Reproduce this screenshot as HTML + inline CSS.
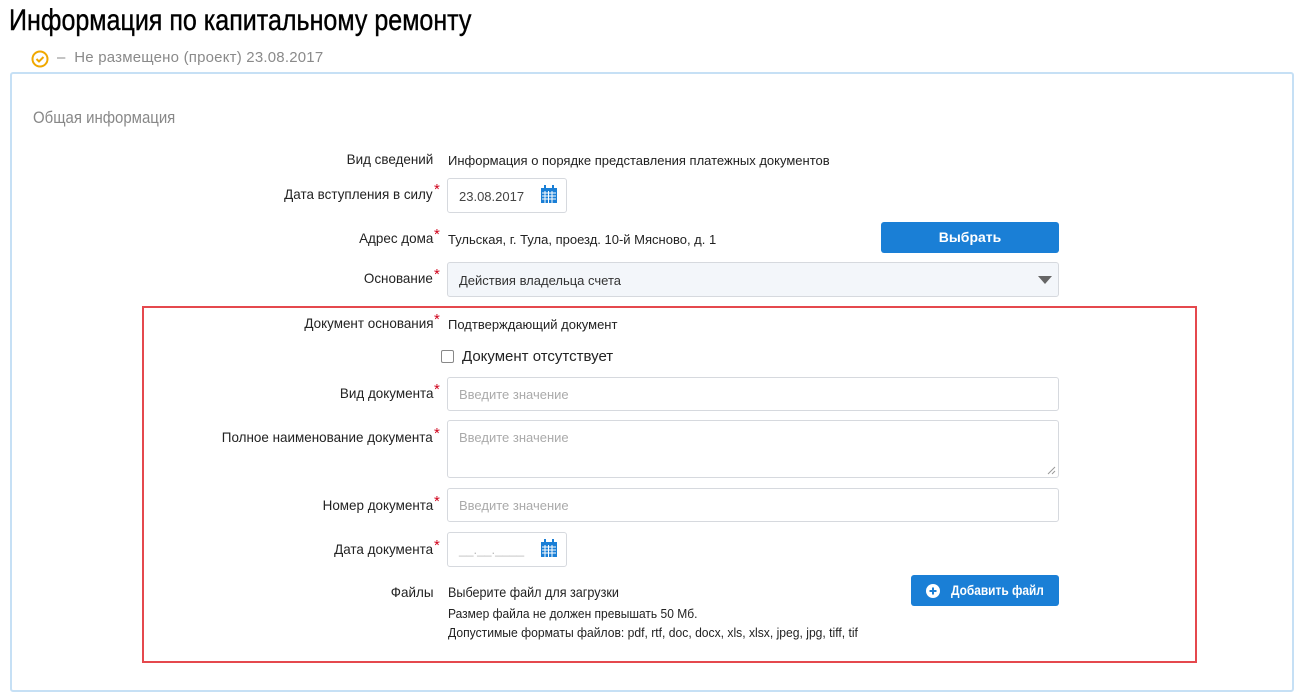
<!DOCTYPE html>
<html><head><meta charset="utf-8"><style>
body{margin:0;width:1305px;height:669px;overflow:hidden;background:#fff;font-family:"Liberation Sans",sans-serif;color:#222;position:relative}
.a{position:absolute;white-space:nowrap}
.lbl{position:absolute;right:872px;font-size:14px;white-space:nowrap;color:#222;transform:scaleX(0.96);transform-origin:right center}
.st{color:#d0021b;font-size:15px;position:absolute;left:434px}
.val{position:absolute;left:448px;font-size:13px;color:#222;white-space:nowrap}
.inp{position:absolute;left:447px;width:612px;height:32px;border:1px solid #d6d9de;border-radius:3px;background:#fff;box-sizing:border-box;font-size:13px;color:#aaa;padding:9px 11px}
.btn{position:absolute;background:#1a7fd6;color:#fff;border-radius:3px;font-size:14px;font-weight:bold;text-align:center;white-space:nowrap}
</style></head><body>
<div class="a" style="left:9px;top:4px;font-size:30px;color:#000;transform:scaleX(0.835);transform-origin:left center;-webkit-text-stroke:0.4px #000">Информация по капитальному ремонту</div>
<svg class="a" style="left:31px;top:50px" width="18" height="18" viewBox="0 0 18 18"><circle cx="9" cy="9" r="7.5" fill="none" stroke="#f0a800" stroke-width="2"/><path d="M5.5 9l2.5 2.5 4.5-4.5" fill="none" stroke="#f0a800" stroke-width="2"/></svg>
<div class="a" style="left:57px;top:49px;font-size:15px;color:#8a8a8a;letter-spacing:0.2px">–&nbsp; Не размещено (проект) 23.08.2017</div>
<div class="a" style="left:10px;top:72px;width:1284px;height:620px;border:2px solid #c6e0f5;border-radius:3px;box-sizing:border-box"></div>
<div class="a" style="left:33px;top:108px;font-size:17px;color:#888;transform:scaleX(0.88);transform-origin:left center">Общая информация</div>

<div class="lbl" style="top:151px">Вид сведений</div>
<div class="val" style="top:153px">Информация о порядке представления платежных документов</div>

<div class="lbl" style="top:186px">Дата вступления в силу</div><div class="st" style="top:181px">*</div>
<div class="inp" style="top:178px;width:120px;height:35px;color:#444;padding-top:10px">23.08.2017</div>
<svg class="a" style="left:540px;top:185px" width="18" height="19" viewBox="0 0 18 19"><rect x="1" y="3" width="16" height="15" fill="#1a7fd6"/><rect x="4" y="0" width="2" height="4" fill="#1a7fd6"/><rect x="12" y="0" width="2" height="4" fill="#1a7fd6"/><path d="M2 8h14M2 11h14M2 14h14M5 6v12M8.5 6v12M12 6v12" stroke="#fff" stroke-width="1"/></svg>

<div class="lbl" style="top:230px">Адрес дома</div><div class="st" style="top:226px">*</div>
<div class="val" style="top:232px">Тульская, г. Тула, проезд. 10-й Мясново, д. 1</div>
<div class="btn" style="left:881px;top:222px;width:178px;height:31px;line-height:31px">Выбрать</div>

<div class="lbl" style="top:270px">Основание</div><div class="st" style="top:266px">*</div>
<div class="inp" style="top:262px;height:35px;background:#f3f6fa;color:#333;padding-top:10px">Действия владельца счета</div>
<div class="a" style="left:1038px;top:276px;width:0;height:0;border-left:7px solid transparent;border-right:7px solid transparent;border-top:8px solid #666"></div>

<div class="a" style="left:142px;top:306px;width:1055px;height:357px;border:2px solid #e5484d;box-sizing:border-box"></div>

<div class="lbl" style="top:315px">Документ основания</div><div class="st" style="top:311px">*</div>
<div class="val" style="top:317px">Подтверждающий документ</div>
<div class="a" style="left:441px;top:350px;width:11px;height:11px;border:1px solid #888;border-radius:2px;background:#fff"></div>
<div class="a" style="left:462px;top:348px;font-size:15px;color:#222">Документ отсутствует</div>

<div class="lbl" style="top:385px">Вид документа</div><div class="st" style="top:381px">*</div>
<div class="inp" style="top:377px;height:34px">Введите значение</div>

<div class="lbl" style="top:429px">Полное наименование документа</div><div class="st" style="top:425px">*</div>
<div class="inp" style="top:420px;height:58px">Введите значение</div>
<svg class="a" style="left:1047px;top:466px" width="9" height="9"><path d="M1 8L8 1M5 8L8 5" stroke="#999"/></svg>

<div class="lbl" style="top:497px">Номер документа</div><div class="st" style="top:493px">*</div>
<div class="inp" style="top:488px;height:34px">Введите значение</div>

<div class="lbl" style="top:541px">Дата документа</div><div class="st" style="top:537px">*</div>
<div class="inp" style="top:532px;width:120px;height:35px;color:#bbb">__.__.____</div>
<svg class="a" style="left:540px;top:539px" width="18" height="19" viewBox="0 0 18 19"><rect x="1" y="3" width="16" height="15" fill="#1a7fd6"/><rect x="4" y="0" width="2" height="4" fill="#1a7fd6"/><rect x="12" y="0" width="2" height="4" fill="#1a7fd6"/><path d="M2 8h14M2 11h14M2 14h14M5 6v12M8.5 6v12M12 6v12" stroke="#fff" stroke-width="1"/></svg>

<div class="lbl" style="top:584px">Файлы</div>
<div class="a" style="left:448px;top:584px;font-size:14px;transform:scaleX(0.9);transform-origin:left center">Выберите файл для загрузки</div>
<div class="a" style="left:448px;top:607px;font-size:12.5px;transform:scaleX(0.96);transform-origin:left center">Размер файла не должен превышать 50 Мб.</div>
<div class="a" style="left:448px;top:626px;font-size:12.5px;transform:scaleX(0.97);transform-origin:left center">Допустимые форматы файлов: pdf, rtf, doc, docx, xls, xlsx, jpeg, jpg, tiff, tif</div>
<div class="btn" style="left:911px;top:575px;width:148px;height:31px;line-height:31px;text-align:left"><svg style="position:absolute;left:15px;top:9px" width="14" height="14" viewBox="0 0 14 14"><circle cx="7" cy="7" r="7" fill="#fff"/><path d="M7 3.5v7M3.5 7h7" stroke="#1a7fd6" stroke-width="2"/></svg><span style="position:absolute;left:40px;transform:scaleX(0.85);transform-origin:left center">Добавить файл</span></div>
</body></html>
